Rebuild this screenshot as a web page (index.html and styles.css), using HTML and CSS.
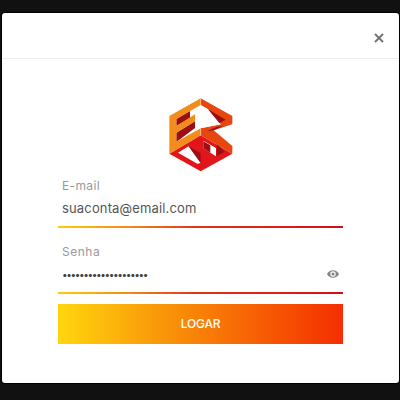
FILE: index.html
```html
<!DOCTYPE html>
<html lang="pt-BR">
<head>
<meta charset="utf-8">
<title>Login</title>
<link rel="stylesheet" href="styles.css">
</head>
<body>
<main class="modal">
  <header class="modal-header">
    <button class="close" type="button" aria-label="Fechar">
      <svg width="10" height="10" viewBox="0 0 10 10"><path d="M1 1l8 8M9 1L1 9"/></svg>
    </button>
  </header>
  <form class="form">
    <svg class="logo" width="66" height="76" viewBox="0 0 198 228">
      <path fill="#e2161a" d="M4 173l94-55 95 55-95 53z"/>
      <path fill="#fff" d="M30 170l32-19 36 50-10 2zM106 134l38 22v25l-38-24z"/>
      <path fill="#9d0d12" d="M62 151l36 21v29zM106 136l21 12v22l-21-13zM146 142l24 26-24 13z"/>
      <path fill="#9d0d12" d="M25 69l41-24v21l-41 24zM25 110l56-34v20l-56 42z"/>
      <path fill="#e84610" d="M98 7l95 53v25l-56 18 56 47v23l-95-55V97l60-12-38-45-22-12z"/>
      <path fill="#fff" d="M66 46l32-19 22 13 38 45-60 12-17-2V54z"/>
      <path fill="#9d0d12" d="M120 40l53 31-19 10zM137 103l-20 3 30-14 18-1z"/>
      <path fill="#f28c1b" d="M4 60L98 7v20L25 69v21l56-35v21l-56 34v27l73-40v21L4 173z"/>
      <path fill="none" stroke="#ffe3c4" stroke-width="1.500" d="M98 7v20M98 97v21"/>
    </svg>
    <label class="field">
      <span class="label email-label">E-mail</span>
      <span class="value email-value">suaconta@email.com</span>
    </label>
    <label class="field password">
      <span class="label senha-label">Senha</span>
      <span class="value dots">••••••••••••••••••••</span>
      <svg class="eye" width="12" height="8" viewBox="0 0 12 8"><path fill="#858585" fill-rule="evenodd" d="M0 4C2.200-1.100 9.800-1.100 12 4 9.800 9.100 2.200 9.100 0 4zM6 1.300a2.700 2.700 0 1 0 0 5.400 2.700 2.700 0 0 0 0-5.400z"/><circle cx="6" cy="4" r="1.600" fill="#858585"/></svg>
    </label>
    <button class="submit" type="button">LOGAR</button>
  </form>
</main>
</body>
</html>
```
FILE: styles.css
```css
* { box-sizing: border-box; }
body {
  margin: 0;
  height: 400px;
  padding: 13px 1px 17px 2px;
  background: #111;
  font-family: Inter, "Liberation Sans", sans-serif;
  overflow: hidden;
}
.modal {
  height: 370px;
  background: #fff;
  border-radius: 3px;
  box-shadow: 0 0 0 1px #000;
}
.modal-header {
  height: 46px;
  padding-right: 15px;
  border-bottom: 1px solid #eee;
  display: flex;
  align-items: center;
  justify-content: flex-end;
}
.close {
  display: flex;
  padding: 0;
  margin-top: 5px;
  border: 0;
  background: none;
}
.close path { stroke: #707070; stroke-width: 1.8; }
.form {
  width: 285px;
  margin: 37px 0 0 56px;
  display: flex;
  flex-direction: column;
}
.logo { display: block; margin: 0 0 4px 110px; flex: none; }
.field {
  position: relative;
  height: 52px;
  padding-left: 4px;
  border-bottom: 2px solid;
  border-image: linear-gradient(90deg, #ffce0a, #f18b1b 25%, #e43416 48%, #cf101d) 1;
  display: flex;
  flex-direction: column;
}
.password { margin-top: 14px; }
.label { height: 19px; line-height: 19px; font-size: 12px; color: #999; }
.email-label { letter-spacing: .35px; }
.value { height: 26px; line-height: 26px; font-size: 13px; color: #555; white-space: nowrap; }
.email-value { letter-spacing: .15px; }
.senha-label { letter-spacing: .5px; }
.dots { font-size: 10px; letter-spacing: -1.37px; color: #444; }
.eye { position: absolute; right: 4px; top: 28px; }
.submit {
  height: 40px;
  margin-top: 10px;
  padding: 0;
  border: 0;
  background: linear-gradient(90deg, #ffd60e, #f98b08 43%, #f42e00);
  color: #fff;
  font: 500 12px/40px Inter, "Liberation Sans", sans-serif;
  letter-spacing: -.2px;
}
```
